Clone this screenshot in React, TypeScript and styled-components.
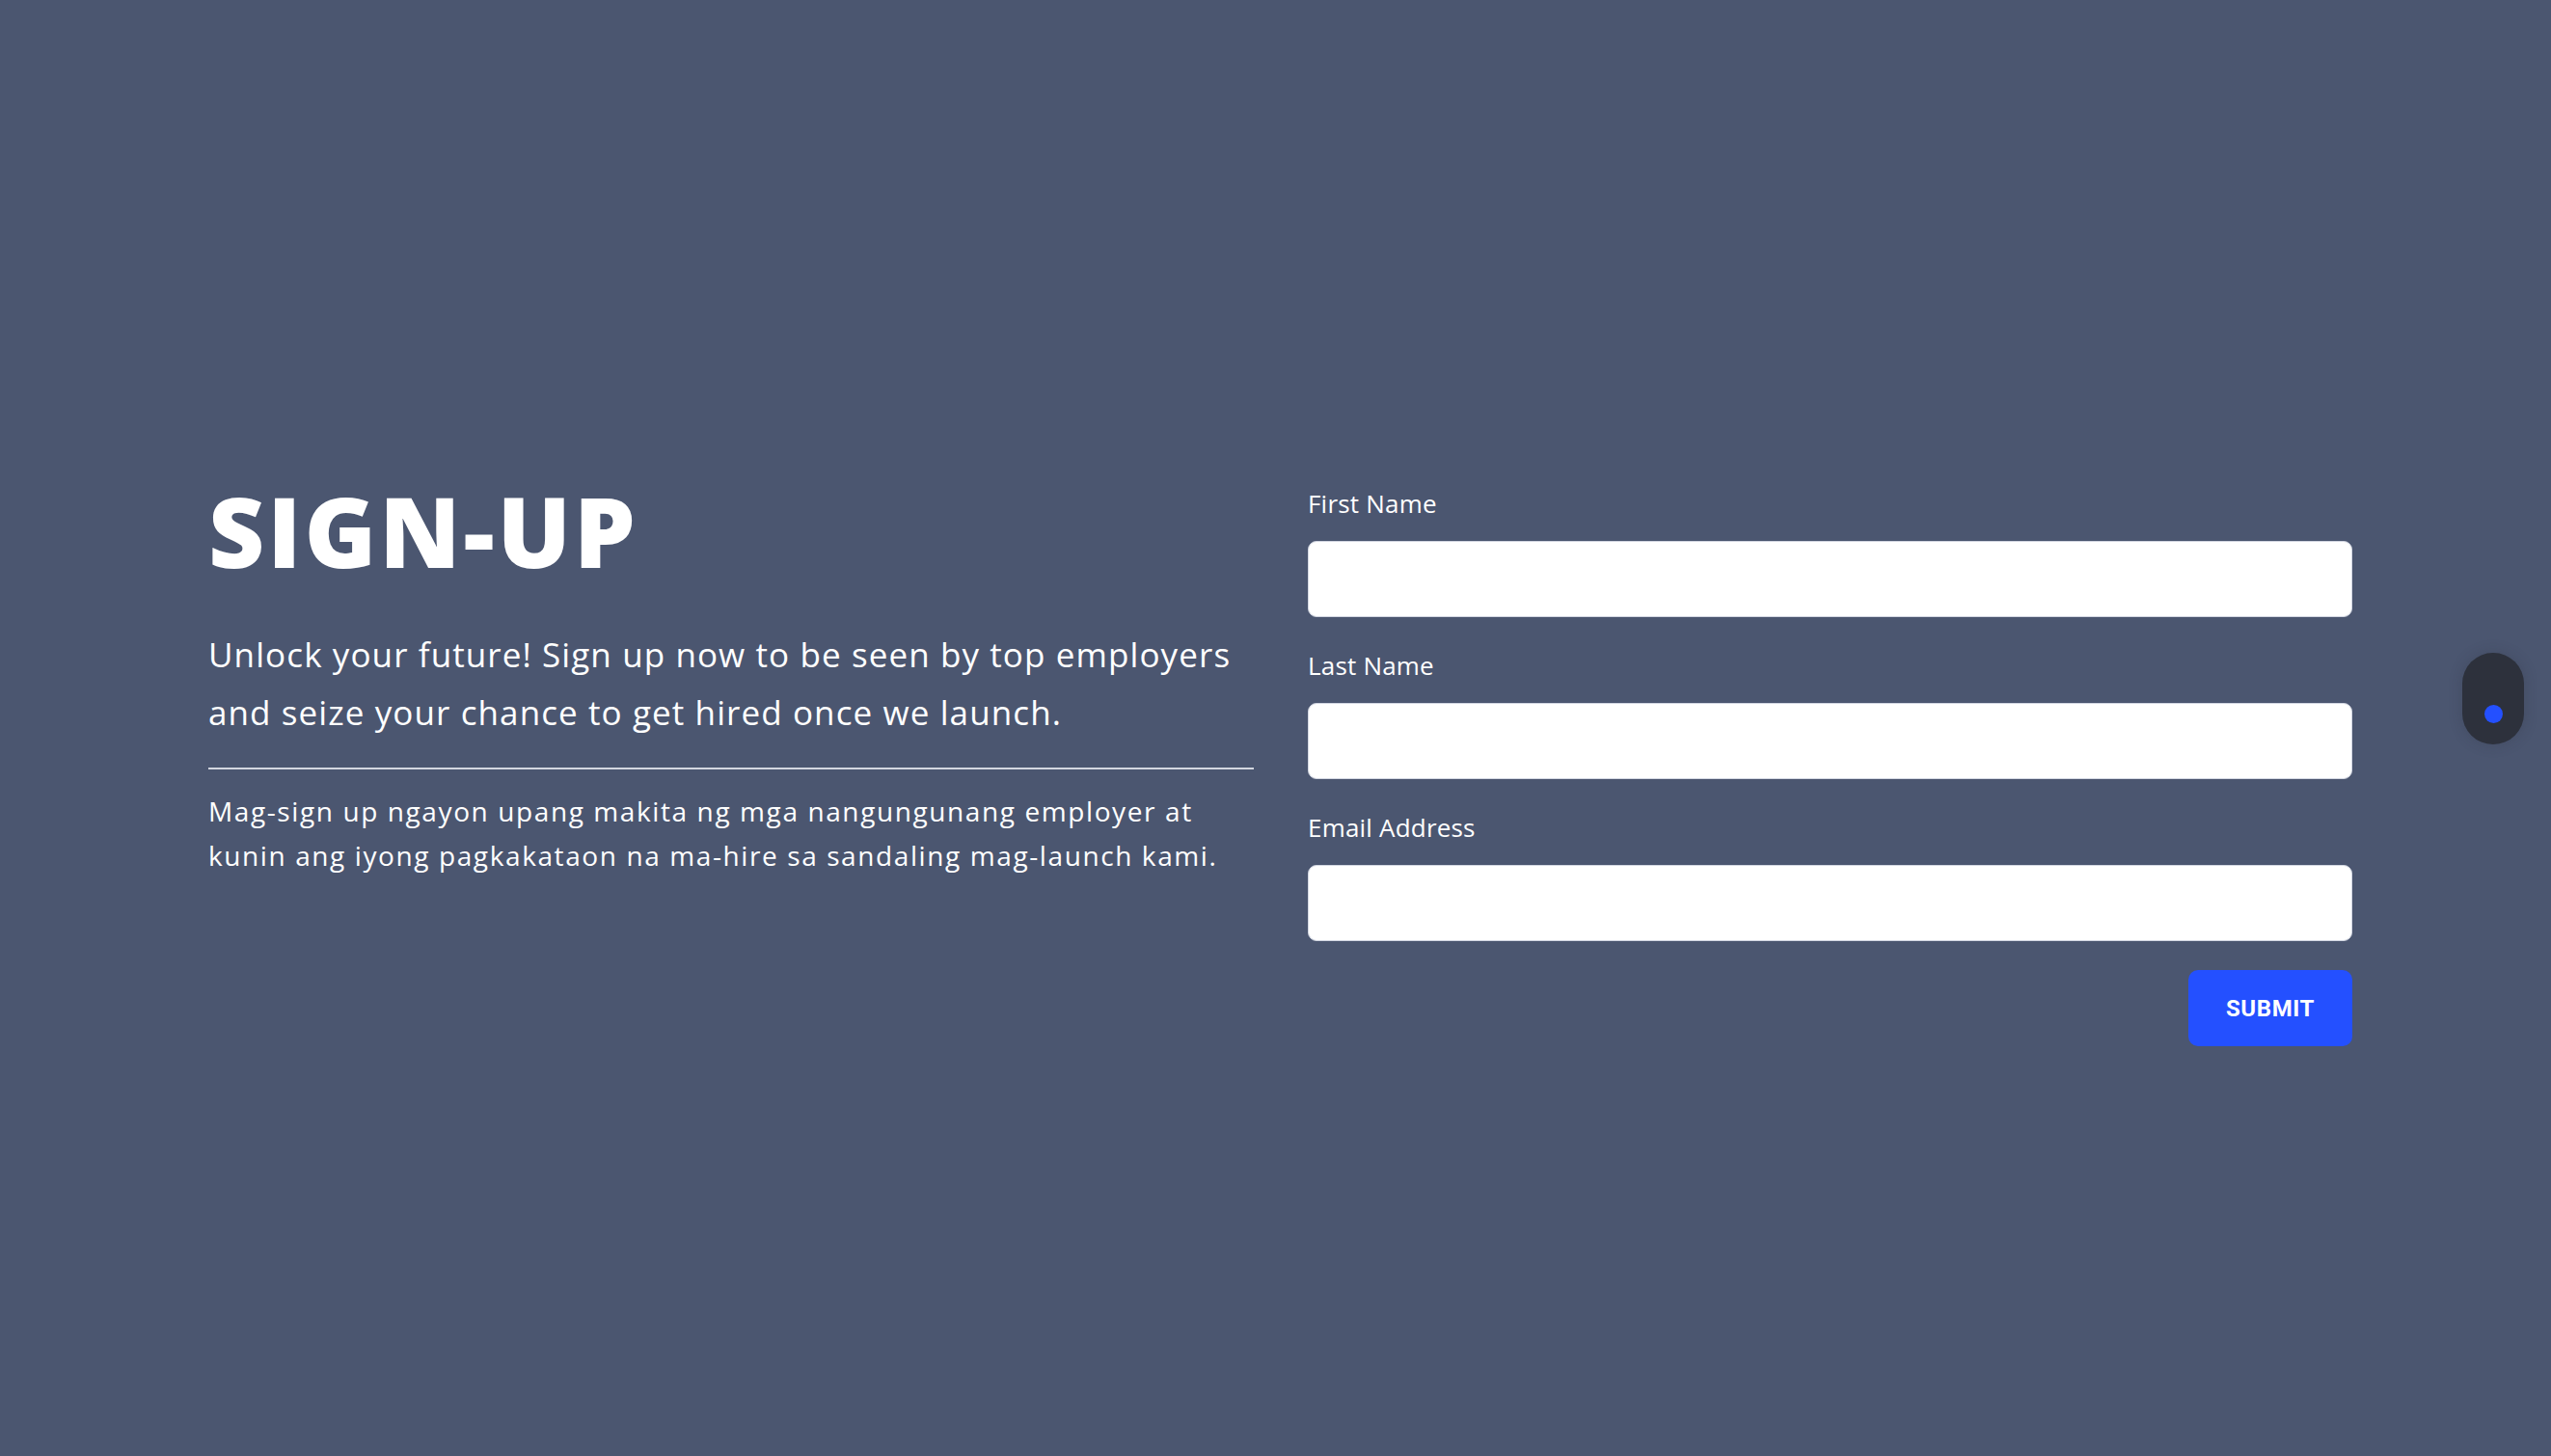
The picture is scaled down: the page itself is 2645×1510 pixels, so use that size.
import React from "react";
import styled, { createGlobalStyle } from "styled-components";

const GlobalStyle = createGlobalStyle`
  html, body {
    margin: 0;
    padding: 0;
    background: #4b5670;
  }
  body {
    font-family: "Open Sans", "Noto Sans", sans-serif;
    color: #ffffff;
  }
  * { box-sizing: border-box; }
`;

const Page = styled.main`
  min-height: 1510px;
  padding: 500px 206px 0 216px;
  display: grid;
  grid-template-columns: 1084px 1083px;
  column-gap: 56px;
  align-items: start;
`;

const Intro = styled.section`
  display: flex;
  flex-direction: column;
`;

const Title = styled.h1`
  margin: 0;
  font-family: "Open Sans", sans-serif;
  font-weight: 800;
  font-size: 101px;
  line-height: 101px;
  letter-spacing: 3px;
  color: #ffffff;
`;

const Lead = styled.p`
  margin: 48px 0 0;
  font-size: 35px;
  line-height: 60px;
  font-weight: 400;
  letter-spacing: 1.1px;
  color: #ffffff;
`;

const Divider = styled.hr`
  margin: 27px 0 0;
  border: none;
  height: 2px;
  background: #d3d6df;
  width: 100%;
`;

const Translation = styled.p`
  margin: 20px 0 0;
  font-size: 28px;
  line-height: 46px;
  font-weight: 400;
  letter-spacing: 1.6px;
  color: #ffffff;
`;

const Form = styled.form`
  margin-top: 6px;
  display: flex;
  flex-direction: column;
  gap: 34px;
`;

const Field = styled.label`
  display: flex;
  flex-direction: column;
  gap: 23px;
`;

const FieldLabel = styled.span`
  font-size: 26px;
  line-height: 32px;
  font-weight: 500;
  letter-spacing: 0.2px;
  color: #ffffff;
`;

const Input = styled.input`
  display: block;
  width: 100%;
  height: 79px;
  border: 1px solid #d3d7e2;
  border-radius: 9px;
  background: #ffffff;
  padding: 0 20px;
  font-size: 26px;
  font-family: "Open Sans", sans-serif;
  outline: none;
`;

const Actions = styled.div`
  display: flex;
  justify-content: flex-end;
  margin-top: -4px;
`;

const SubmitButton = styled.button`
  width: 170px;
  height: 79px;
  border: none;
  border-radius: 10px;
  background: #2450ff;
  color: #ffffff;
  font-family: Roboto, "Liberation Sans", sans-serif;
  font-weight: 700;
  font-size: 24px;
  letter-spacing: 0.6px;
  cursor: pointer;
`;

const ScrollPill = styled.div`
  position: fixed;
  top: 677px;
  right: 28px;
  width: 64px;
  height: 95px;
  border-radius: 32px;
  background: #2d313c;
  box-shadow: 0 0 14px rgba(45, 49, 60, 0.25);
  display: flex;
  justify-content: center;
  align-items: flex-end;
  padding-bottom: 22px;
`;

const ScrollDot = styled.span`
  width: 19px;
  height: 19px;
  border-radius: 50%;
  background: #2450ff;
`;

export default function App() {
  return (
    <>
      <GlobalStyle />
      <Page>
        <Intro>
          <Title>SIGN-UP</Title>
          <Lead>
            Unlock your future! Sign up now to be seen by top employers and seize your chance to get hired once we launch.
          </Lead>
          <Divider />
          <Translation>
            Mag-sign up ngayon upang makita ng mga nangungunang employer at kunin ang iyong pagkakataon na ma-hire sa sandaling mag-launch kami.
          </Translation>
        </Intro>
        <Form onSubmit={(e) => e.preventDefault()}>
          <Field>
            <FieldLabel>First Name</FieldLabel>
            <Input type="text" />
          </Field>
          <Field>
            <FieldLabel>Last Name</FieldLabel>
            <Input type="text" />
          </Field>
          <Field>
            <FieldLabel>Email Address</FieldLabel>
            <Input type="email" />
          </Field>
          <Actions>
            <SubmitButton type="submit">SUBMIT</SubmitButton>
          </Actions>
        </Form>
      </Page>
      <ScrollPill>
        <ScrollDot />
      </ScrollPill>
    </>
  );
}
